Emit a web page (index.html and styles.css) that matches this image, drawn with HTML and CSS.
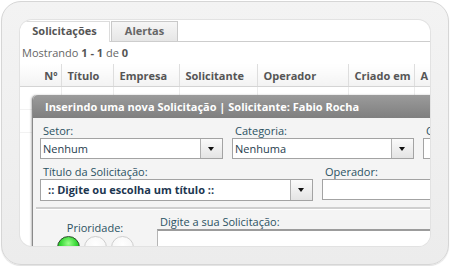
FILE: index.html
```html
<!DOCTYPE html>
<html lang="pt-BR">
<head>
  <meta charset="UTF-8">
  <title>Solicitações</title>
  <meta name="viewport" content="width=device-width, initial-scale=1.0">
  <link rel="stylesheet" href="styles.css">
</head>
<body>
<div class="frame">
  <div class="screen">
    <div class="tabs">
      <div class="tab active">Solicitações</div>
      <div class="tab">Alertas</div>
    </div>
    <div class="count">Mostrando <b>1 - 1</b> de <b>0</b></div>

    <table class="grid">
      <colgroup>
        <col style="width:41px"><col style="width:52px"><col style="width:66px">
        <col style="width:78px"><col style="width:91px"><col style="width:66px"><col style="width:60px">
      </colgroup>
      <thead>
        <tr>
          <th class="num">Nº</th>
          <th>Título</th>
          <th>Empresa</th>
          <th>Solicitante</th>
          <th>Operador</th>
          <th>Criado em</th>
          <th>A</th>
        </tr>
      </thead>
      <tbody>
        <tr><td></td><td></td><td></td><td></td><td></td><td></td><td></td></tr>
        <tr><td></td><td></td><td></td><td></td><td></td><td></td><td></td></tr>
      </tbody>
    </table>

    <!-- janela modal sobre a grade -->
    <div class="dialog">
      <div class="dialog-title">Inserindo uma nova Solicitação | Solicitante: Fabio Rocha</div>
      <div class="dialog-body">
        <div class="form-row">
          <div class="field w-setor">
            <label>Setor:</label>
            <div class="select"><span>Nenhum</span><i class="drop"></i></div>
          </div>
          <div class="field w-cat">
            <label>Categoria:</label>
            <div class="select"><span>Nenhuma</span><i class="drop"></i></div>
          </div>
          <div class="field w-cat">
            <label>Cliente:</label>
            <div class="select"><span></span><i class="drop"></i></div>
          </div>
        </div>

        <div class="form-row row-2">
          <div class="field w-titulo">
            <label>Título da Solicitação:</label>
            <div class="select combo"><span>:: Digite ou escolha um título ::</span><i class="drop"></i></div>
          </div>
          <div class="field w-oper">
            <label>Operador:</label>
            <div class="select"><span></span></div>
          </div>
        </div>

        <div class="sep"></div>

        <div class="form-row row-3">
          <div class="priority">
            <label>Prioridade:</label>
            <div class="dots">
              <span class="dot on"></span>
              <span class="dot"></span>
              <span class="dot"></span>
            </div>
          </div>
          <div class="field w-text">
            <label>Digite a sua Solicitação:</label>
            <div class="textarea"></div>
          </div>
        </div>
      </div>
    </div>
  </div>
</div>
</body>
</html>
```

FILE: styles.css
```css
html, body {
  margin: 0;
  background: #fff;
  font-family: 'Open Sans', 'Noto Sans', Arial, sans-serif;
  font-size: 11px;
  color: #555;
}
.frame {
  margin: 1px;
  width: 448px;
  height: 264px;
  box-sizing: border-box;
  padding: 18px;
  border: 1px solid #d6d6d6;
  border-radius: 20px;
  background: linear-gradient(#f3f3f3, #ececec);
  box-shadow: 0 1px 1px rgba(0,0,0,.12);
}
.screen {
  position: relative;
  height: 100%;
  overflow: hidden;
  border-radius: 12px;
  background: #fff;
  box-shadow: 0 0 0 1px #e2e2e2;
}

/* abas */
.tabs {
  display: flex;
  height: 20px;
  margin-top: 1px;
  border-bottom: 1px solid #cdcdcd;
}
.tab {
  box-sizing: border-box;
  height: 20px;
  width: 67px;
  margin-left: 1px;
  text-align: center;
  line-height: 18px;
  font-weight: 700;
  color: #666;
  border: 1px solid #c9c9c9;
  border-bottom: none;
  background: linear-gradient(#f6f6f6, #e6e6e6);
}
.tab.active {
  width: 90px;
  height: 21px;
  margin-left: 0;
  color: #555;
  background: #fff;
  border-color: #dcdcdc;
  border-left: none;
}
.count {
  padding: 3px 0 0 2px;
  height: 19px;
  color: #666;
}
.count b { color: #555; }

/* grade */
.grid {
  table-layout: fixed;
  border-collapse: collapse;
  width: 454px;
}
.grid th {
  height: 22px;
  padding: 0 0 0 6px;
  text-align: left;
  white-space: nowrap;
  overflow: hidden;
  font-weight: 700;
  color: #555;
  border-left: 1px solid #dedede;
  border-bottom: 1px solid #d4d4d4;
  background: linear-gradient(#fff, #f3f3f3);
}
.grid th.num {
  text-align: right;
  padding: 0 3px 0 0;
  border-left: none;
}
.grid td {
  height: 22px;
  padding: 0;
  border-left: 1px solid #ececec;
  border-bottom: 1px solid #f2f2f2;
}
.grid td:first-child { border-left: none; }

/* janela */
.dialog {
  position: absolute;
  left: 12px;
  top: 75px;
  width: 520px;
  height: 260px;
  background: #f4f4f4;
  border-left: 1px solid #8a8a8a;
  border-radius: 5px 5px 0 0;
  box-shadow: -1px 0 2px rgba(0,0,0,.25);
}
.dialog-title {
  height: 23px;
  line-height: 23px;
  padding-left: 12px;
  border-radius: 5px 0 0 0;
  color: #fff;
  font-weight: 700;
  background: linear-gradient(#9b9b9b, #7f7f7f);
}
.dialog-body {
  padding: 6px 0 0 7px;
}
.form-row {
  display: flex;
  gap: 9px;
}
.form-row > * { flex-shrink: 0; }
.row-2 { margin-top: 6px; }
.row-3 { margin-top: 5px; gap: 7px; }
.field label,
.priority label {
  display: block;
  height: 14px;
  line-height: 14px;
  padding-left: 3px;
  color: #2b5262;
  font-size: 11px;
  white-space: nowrap;
}
.w-setor { width: 183px; }
.w-cat { width: 182px; }
.w-titulo { width: 273px; }
.w-oper { width: 180px; }
.w-text { width: 300px; }

.select {
  display: flex;
  box-sizing: border-box;
  height: 21px;
  border: 1px solid #a3a3a3;
  background: #fff;
}
.select span {
  flex: 1;
  padding-left: 2px;
  line-height: 19px;
  color: #1f3d4d;
  white-space: nowrap;
  overflow: hidden;
}
.combo { height: 22px; }
.combo span {
  padding-left: 7px;
  line-height: 20px;
  font-weight: 700;
  color: #1c3650;
}
.drop {
  position: relative;
  width: 21px;
  border-left: 1px solid #b0b0b0;
  background: linear-gradient(#fafafa, #e4e4e4);
}
.drop::after {
  content: "";
  position: absolute;
  left: 7px;
  top: 8px;
  border-left: 3.5px solid transparent;
  border-right: 3.5px solid transparent;
  border-top: 4px solid #111;
}
.sep {
  margin: 6px 0 0 -4px;
  height: 0;
  border-top: 2px solid #cfcfcf;
  border-bottom: 1px solid #fff;
}

/* prioridade */
.priority {
  width: 110px;
  padding-top: 6px;
  text-align: center;
}
.priority label { padding-left: 0; }
.dots {
  display: flex;
  justify-content: center;
  gap: 4px;
  margin-top: 1px;
}
.dot {
  width: 23px;
  height: 23px;
  box-sizing: border-box;
  border-radius: 50%;
  border: 1px solid #cdcdcd;
  background: radial-gradient(circle at 50% 35%, #fff 0%, #f1f1f1 100%);
}
.dot.on {
  border-color: #2d4a2d;
  background: radial-gradient(circle at 50% 30%, #9bff8a 0%, #33d633 45%, #10a010 100%);
}
.textarea {
  height: 60px;
  border: 1px solid #b5b5b5;
  border-top: 2px solid #9c9c9c;
  background: #fff;
}
```
